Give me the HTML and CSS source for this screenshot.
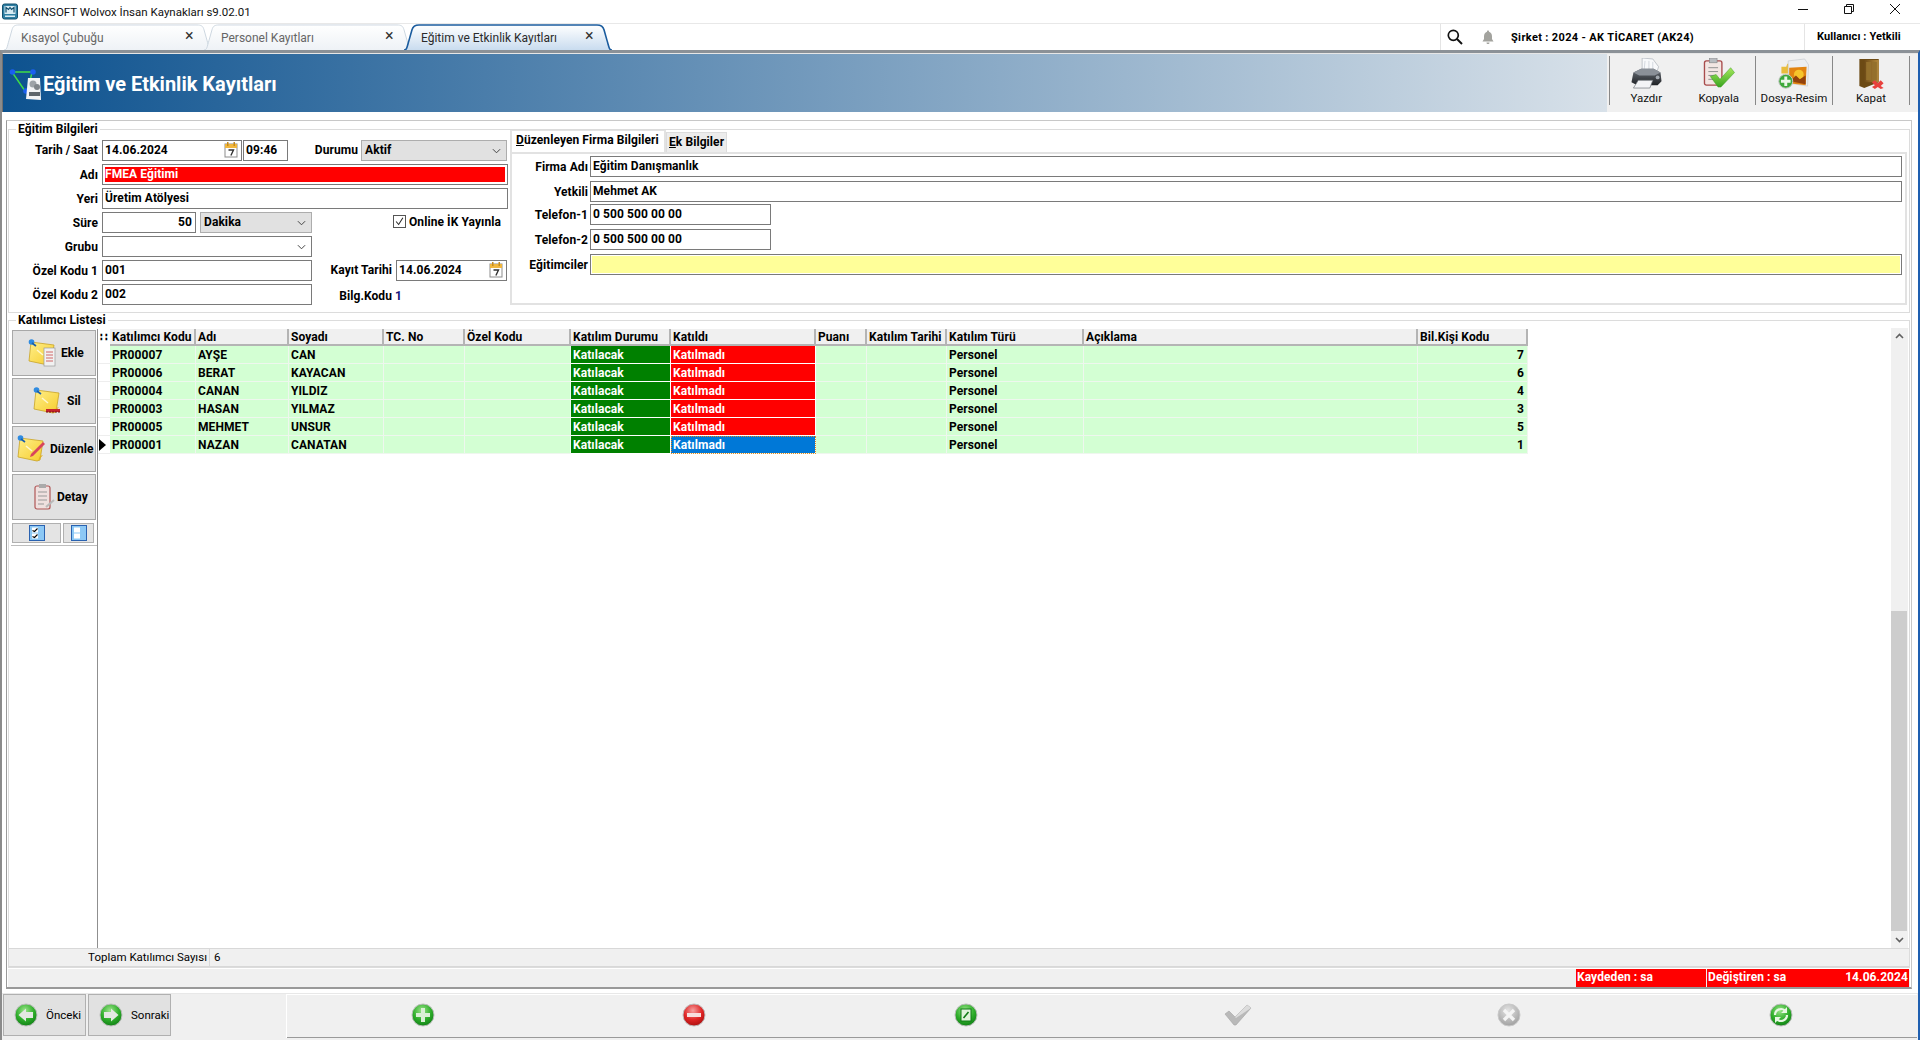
FILE: index.html
```html
<!DOCTYPE html>
<html lang="tr">
<head>
<meta charset="utf-8">
<title>AKINSOFT Wolvox İnsan Kaynakları</title>
<link rel="stylesheet" href="styles.css">
</head>
<body>
<svg class="defs" aria-hidden="true">
  <defs>
    <radialGradient id="gball" cx="45%" cy="30%" r="75%"><stop offset="0" stop-color="#9be58a"/><stop offset=".55" stop-color="#2fae2b"/><stop offset="1" stop-color="#0c7a12"/></radialGradient>
    <radialGradient id="rball" cx="45%" cy="30%" r="75%"><stop offset="0" stop-color="#f6a0a0"/><stop offset=".55" stop-color="#e02525"/><stop offset="1" stop-color="#a50d0d"/></radialGradient>
    <radialGradient id="xball" cx="45%" cy="30%" r="75%"><stop offset="0" stop-color="#e4e4e4"/><stop offset="1" stop-color="#9c9c9c"/></radialGradient>
    <linearGradient id="note" x1="0" y1="0" x2="1" y2="1"><stop offset="0" stop-color="#ffef8a"/><stop offset="1" stop-color="#f6cc2c"/></linearGradient>
    <linearGradient id="tabA" x1="0" y1="0" x2="0" y2="1"><stop offset="0" stop-color="#fff"/><stop offset="1" stop-color="#c9dcef"/></linearGradient>
    <linearGradient id="tabI" x1="0" y1="0" x2="0" y2="1"><stop offset="0" stop-color="#fff"/><stop offset="1" stop-color="#eef2f6"/></linearGradient>
    <linearGradient id="door" x1="0" y1="0" x2="1" y2="0"><stop offset="0" stop-color="#6d4a16"/><stop offset="1" stop-color="#b58a3c"/></linearGradient>
    <linearGradient id="chk" x1="0" y1="0" x2="0" y2="1"><stop offset="0" stop-color="#a5e85c"/><stop offset="1" stop-color="#39a51f"/></linearGradient>
    <linearGradient id="prn" x1="0" y1="0" x2="0" y2="1"><stop offset="0" stop-color="#6b7179"/><stop offset="1" stop-color="#1f2226"/></linearGradient>
    <symbol id="i-cal" viewBox="0 0 14 16">
      <rect x="1" y="2" width="12" height="13" fill="#fff" stroke="#8d8d8d"/><rect x="1" y="2" width="12" height="4" fill="#f1b73e"/>
      <rect x="3" y="0" width="1.5" height="4" fill="#c58a1d"/><rect x="9.5" y="0" width="1.5" height="4" fill="#c58a1d"/>
      <path d="M4.5 8h5l-2.6 5.5" fill="none" stroke="#333" stroke-width="1.4"/>
    </symbol>
    <symbol id="i-chev" viewBox="0 0 10 6"><path d="M1 1l4 4 4-4" fill="none" stroke="#444" stroke-width="1.1"/></symbol>
    <symbol id="i-note" viewBox="0 0 28 28">
      <path d="M3 3l23 3-3 19-3 1-19-4z" fill="url(#note)" stroke="#c9a326" stroke-width=".8"/>
      <path d="M21 26l2-5 3-1z" fill="#e0b020"/>
      <circle cx="3.500" cy="3" r="2.800" fill="#2f8be0"/><path d="M4 4l4 3" stroke="#1c5fa8" stroke-width="1.600"/>
      <path d="M9 11l6 5" stroke="#fff8cf" stroke-width="1.500"/>
    </symbol>
    <symbol id="i-ball-plus" viewBox="0 0 24 24"><circle cx="12" cy="12" r="11" fill="url(#gball)" stroke="#bcbcbc"/><path d="M10 5h4v5h5v4h-5v5h-4v-5H5v-4h5z" fill="#d9efd5"/></symbol>
    <symbol id="i-ball-minus" viewBox="0 0 24 24"><circle cx="12" cy="12" r="11" fill="url(#rball)" stroke="#bcbcbc"/><rect x="5" y="10" width="14" height="4" fill="#f7dede"/></symbol>
    <symbol id="i-ball-edit" viewBox="0 0 24 24"><circle cx="12" cy="12" r="11" fill="url(#gball)" stroke="#bcbcbc"/><rect x="7" y="6" width="10" height="12" fill="#dff3da" stroke="#0f7a14"/><path d="M9.5 15l5-6" stroke="#0f7a14" stroke-width="1.6"/></symbol>
    <symbol id="i-ball-x" viewBox="0 0 24 24"><circle cx="12" cy="12" r="11" fill="url(#xball)" stroke="#c9c9c9"/><path d="M7 7l10 10M17 7L7 17" stroke="#f4f4f4" stroke-width="3.4"/></symbol>
    <symbol id="i-ball-ref" viewBox="0 0 24 24"><circle cx="12" cy="12" r="11" fill="url(#gball)" stroke="#bcbcbc"/><path d="M6 12a6 6 0 0 1 10-4.4M18 12a6 6 0 0 1-10 4.4" fill="none" stroke="#e7f7e2" stroke-width="2.2"/><path d="M18 4v6h-6zM6 20v-6h6z" fill="#e7f7e2"/></symbol>
    <symbol id="i-ball-left" viewBox="0 0 24 24"><circle cx="12" cy="12" r="11" fill="url(#gball)" stroke="#bcbcbc"/><path d="M4.5 12L12 5.5V9h7v6h-7v3.5z" fill="#e3e8e2"/></symbol>
    <symbol id="i-ball-right" viewBox="0 0 24 24"><circle cx="12" cy="12" r="11" fill="url(#gball)" stroke="#bcbcbc"/><path d="M19.5 12L12 5.5V9H5v6h7v3.5z" fill="#e3e8e2"/></symbol>
    <symbol id="i-minibox" viewBox="0 0 16 16"><rect x=".5" y=".5" width="15" height="15" fill="#8cc8f5" stroke="#2a62b0"/><rect x="3" y="2.5" width="6" height="5" fill="#fff"/><rect x="3" y="8.5" width="6" height="5" fill="#fff"/></symbol>
  </defs>
</svg>

<div class="app">
  <header class="titlebar">
    <svg class="appicon" viewBox="0 0 16 16"><rect x=".5" y=".5" width="15" height="15" rx="2" fill="#2e7fa3" stroke="#12506f"/><rect x="2.5" y="2.5" width="11" height="8" fill="#d8ecf4"/><path d="M4 9V4l2.5 2L8 4l1.5 2L12 4v5" fill="none" stroke="#12506f" stroke-width="1.2"/><rect x="3" y="12" width="10" height="1.5" fill="#d8ecf4"/></svg>
    <span class="titletext">AKINSOFT Wolvox İnsan Kaynakları s9.02.01</span>
    <div class="winctl">
      <svg class="winbtn" viewBox="0 0 12 12"><path d="M1 6.5h10" stroke="#111"/></svg>
      <svg class="winbtn" viewBox="0 0 12 12"><path d="M3.5 3V1.5h7v7H9M1.5 3.5h7v7h-7z" fill="none" stroke="#111"/></svg>
      <svg class="winbtn" viewBox="0 0 12 12"><path d="M1 1l10 10M11 1L1 11" stroke="#111"/></svg>
    </div>
  </header>

  <nav class="tabbar">
    <div class="tab">
      <svg class="tabshape" viewBox="0 0 210 27" preserveAspectRatio="none"><path d="M1 27C4 27 4 24 6 17L9 6C10 2 12 1 16 1H194C198 1 200 2 201 6L204 17C206 24 206 27 209 27" fill="url(#tabI)" stroke="#ccd6df"/></svg>
      <span class="tablabel">Kısayol Çubuğu</span><span class="tabx">×</span>
    </div>
    <div class="tab">
      <svg class="tabshape" viewBox="0 0 210 27" preserveAspectRatio="none"><path d="M1 27C4 27 4 24 6 17L9 6C10 2 12 1 16 1H194C198 1 200 2 201 6L204 17C206 24 206 27 209 27" fill="url(#tabI)" stroke="#ccd6df"/></svg>
      <span class="tablabel">Personel Kayıtları</span><span class="tabx">×</span>
    </div>
    <div class="tab tab-active">
      <svg class="tabshape" viewBox="0 0 210 27" preserveAspectRatio="none"><path d="M1 27C4 27 4 24 6 17L9 6C10 2 12 1 16 1H194C198 1 200 2 201 6L204 17C206 24 206 27 209 27" fill="url(#tabA)" stroke="#1b5c9e" stroke-width="1.6"/></svg>
      <span class="tablabel">Eğitim ve Etkinlik Kayıtları</span><span class="tabx">×</span>
    </div>
    <div class="tabinfo">
      <svg class="searchicon" viewBox="0 0 16 16"><circle cx="6.3" cy="6.3" r="5" fill="none" stroke="#111" stroke-width="1.7"/><path d="M10 10l5 5" stroke="#111" stroke-width="2"/></svg>
      <svg class="bellicon" viewBox="0 0 12 14"><path d="M6 0.5c.8 0 1 .6 1 1.2C9 2.3 10 4 10 6.500v2.500l1.500 2.500H.5L2 9V6.500C2 4 3 2.300 5 1.700 5 1.100 5.200.5 6 .5zM4.500 12.500h3c0 1-.6 1.500-1.500 1.500s-1.500-.5-1.500-1.500z" fill="#a3a39e"/></svg>
      <span class="company">Şirket : 2024 - AK TİCARET (AK24)</span>
      <span class="user">Kullanıcı : Yetkili</span>
    </div>
  </nav>

  <main class="window">
    <section class="banner">
      <div class="bannerhead">
        <svg class="bannericon" viewBox="0 0 34 34"><path d="M3 4h20M3 4l13 19M23 4l-3 14" stroke="#3fdc47" stroke-width="1.400" fill="none"/><circle cx="3.500" cy="4" r="2.800" fill="#1a5ff0"/><circle cx="24" cy="4" r="2.800" fill="#1a5ff0"/><circle cx="17" cy="23" r="2.800" fill="#1a5ff0"/><path d="M19 10h12l1 22-15-1z" fill="#f2f4f6"/><circle cx="24" cy="16" r="3.500" fill="#9da3a8"/><circle cx="28" cy="19" r="3" fill="#7f858a"/><rect x="20" y="24" width="11" height="4" fill="#5e666c"/></svg>
        <h1 class="bannertitle">Eğitim ve Etkinlik Kayıtları</h1>
      </div>
      <div class="toolbar">
        <div class="toolgroup tg-2">
          <div class="tool">
            <svg class="toolicon" viewBox="0 0 32 32"><path d="M12 0l11 1 6 8-3 9H12z" fill="#f8f9fb" stroke="#aab0b8" stroke-width=".7"/><path d="M15 3l-1 10M19 3v10M23 4v9" stroke="#d3d8de"/><path d="M3 15l8-4h13l7 4 1 9-4 4H7l-6-3z" fill="url(#prn)"/><path d="M3 15l8-4h13l7 4-6 3H9z" fill="#8a9098"/><path d="M8 23h15l-3 8H3z" fill="#f3f4f6" stroke="#6e737a" stroke-width=".7"/><circle cx="28" cy="20" r="2" fill="#a3a9b0"/></svg>
            <span class="toollabel">Yazdır</span>
          </div>
          <div class="tool">
            <svg class="toolicon" viewBox="0 0 32 32"><rect x="1" y="3" width="18" height="25" rx="2" fill="#f3e6e3" stroke="#a84c4c" stroke-width="1.400"/><rect x="6" y="0" width="8" height="5" fill="#b9bcc0" stroke="#777" stroke-width=".5"/><path d="M5 10h10M5 14h10M5 18h7M5 22h5" stroke="#8f8f8f"/><path d="M7 19l6-2 4 5L28 10l4 5-14 15h-3z" fill="url(#chk)" stroke="#3d9c22" stroke-width=".5"/></svg>
            <span class="toollabel">Kopyala</span>
          </div>
        </div>
        <div class="toolgroup">
          <div class="tool">
            <svg class="toolicon" viewBox="0 0 32 32"><path d="M3 9h5l1-3h4v10H3z" fill="#e9bd3b"/><path d="M10 3l17-2 4 6-1 22-20-3z" fill="#eceef1" stroke="#c0c4c9" stroke-width=".6"/><path d="M11 10l18-1-1 19-17-2z" fill="#e28412"/><circle cx="21" cy="17" r="5" fill="#f6c52b"/><path d="M12 24l6-6 4 4 6-4v9z" fill="#93420c"/><circle cx="7.500" cy="24" r="7.200" fill="#3da93a" stroke="#c8c8c8"/><path d="M6 19h3v3.500h3.500v3H9V29H6v-3.500H2.500v-3H6z" fill="#eaf6e8"/></svg>
            <span class="toollabel">Dosya-Resim</span>
          </div>
        </div>
        <div class="toolgroup">
          <div class="tool">
            <svg class="toolicon" viewBox="0 0 32 32"><path d="M4 1h20v24l-15 6-5-2z" fill="#6c4a14"/><path d="M9 2h15v23H9z" fill="url(#door)"/><path d="M11 4h5v19h-5zM18 4h4v19h-4z" fill="#94702c"/><path d="M20 23l3 3 3-3 3 3-3 3 3 2-3 1-3-2-3 2-3-2 3-2-3-3z" fill="#e8413d"/></svg>
            <span class="toollabel">Kapat</span>
          </div>
        </div>
      </div>
    </section>

    <div class="outerbox">
      <section class="group group-info">
        <span class="legend">Eğitim Bilgileri</span>
        <div class="infobody">
          <div class="form">
            <div class="row">
              <label class="lab">Tarih / Saat</label>
              <div class="inp w-date"><span>14.06.2024</span><svg class="cal" viewBox="0 0 14 16"><use href="#i-cal"/></svg></div>
              <div class="inp w-time"><span>09:46</span></div>
              <label class="lab lab-durum">Durumu</label>
              <div class="sel w-durum"><span>Aktif</span><svg class="chev" viewBox="0 0 10 6"><use href="#i-chev"/></svg></div>
            </div>
            <div class="row">
              <label class="lab">Adı</label>
              <div class="inp w-full inp-red"><span>FMEA Eğitimi</span></div>
            </div>
            <div class="row">
              <label class="lab">Yeri</label>
              <div class="inp w-full"><span>Üretim Atölyesi</span></div>
            </div>
            <div class="row">
              <label class="lab">Süre</label>
              <div class="inp w-sure inp-right"><span>50</span></div>
              <div class="sel w-birim"><span>Dakika</span><svg class="chev" viewBox="0 0 10 6"><use href="#i-chev"/></svg></div>
              <div class="check"><span class="checkbox"><svg viewBox="0 0 13 13"><path d="M2.500 6.500l3 3.500 5-8" fill="none" stroke="#222" stroke-width="1.200"/></svg></span><span>Online İK Yayınla</span></div>
            </div>
            <div class="row">
              <label class="lab">Grubu</label>
              <div class="inp w-half inp-combo"><svg class="chev" viewBox="0 0 10 6"><use href="#i-chev"/></svg></div>
            </div>
            <div class="row">
              <label class="lab">Özel Kodu 1</label>
              <div class="inp w-half"><span>001</span></div>
              <label class="lab lab-kayit">Kayıt Tarihi</label>
              <div class="inp w-kayit"><span>14.06.2024</span><svg class="cal" viewBox="0 0 14 16"><use href="#i-cal"/></svg></div>
            </div>
            <div class="row">
              <label class="lab">Özel Kodu 2</label>
              <div class="inp w-half"><span>002</span></div>
              <label class="lab lab-kayit lab-low">Bilg.Kodu</label>
              <span class="bilgval">1</span>
            </div>
          </div>

          <div class="panel">
            <div class="pagetabs">
              <span class="pagetab pagetab-on"><u>D</u>üzenleyen Firma Bilgileri</span>
              <span class="pagetab pagetab-ek"><u>E</u>k Bilgiler</span>
            </div>
            <div class="page">
              <div class="prow"><label class="plab">Firma Adı</label><div class="inp p-full"><span>Eğitim Danışmanlık</span></div></div>
              <div class="prow"><label class="plab">Yetkili</label><div class="inp p-full"><span>Mehmet AK</span></div></div>
              <div class="prow prow-tight"><label class="plab">Telefon-1</label><div class="inp p-tel"><span>0 500 500 00 00</span></div></div>
              <div class="prow"><label class="plab">Telefon-2</label><div class="inp p-tel"><span>0 500 500 00 00</span></div></div>
              <div class="prow"><label class="plab">Eğitimciler</label><div class="inp p-full inp-yellow"></div></div>
            </div>
          </div>
        </div>
      </section>

      <section class="group group-list">
        <span class="legend">Katılımcı Listesi</span>
        <div class="listbody">
          <aside class="side">
            <div class="sidebtns">
              <button class="sbtn sbtn-ekle"><svg class="sicon" viewBox="0 0 28 28"><use href="#i-note"/><rect x="16" y="9" width="11" height="18" fill="#f1f1f1" stroke="#9a9a9a" stroke-width=".7"/><path d="M18 13h7M18 16h7M18 19h7M18 22h7" stroke="#d06666"/></svg><span>Ekle</span></button>
              <button class="sbtn sbtn-sil"><svg class="sicon" viewBox="0 0 28 28"><use href="#i-note"/><path d="M13 22h14v3H13z" fill="#c4232a"/><path d="M13 25h14" stroke="#7d1116" stroke-dasharray="2 1"/></svg><span>Sil</span></button>
              <button class="sbtn sbtn-duz"><svg class="sicon" viewBox="0 0 28 28"><use href="#i-note"/><path d="M14 19L26 7l2 2-12 12-3 1z" fill="#d8445c"/></svg><span>Düzenle</span></button>
              <button class="sbtn sbtn-det"><svg class="sicon" viewBox="0 0 28 28"><rect x="6" y="3" width="15" height="23" rx="2" fill="#efe0df" stroke="#b05757" stroke-width="1.200"/><rect x="10" y="1" width="7" height="4" fill="#aaa"/><path d="M9 9h9M9 13h9M9 17h9M9 21h6" stroke="#999"/><path d="M17 24l8-7" stroke="#b9b9b9" stroke-width="2"/></svg><span>Detay</span></button>
            </div>
            <div class="minibtns">
              <button class="mbtn mbtn-w"><svg class="mini" viewBox="0 0 16 16"><use href="#i-minibox"/><path d="M3.500 5.500l2 1 3-3M3.500 11.500l2 1 3-3" fill="none" stroke="#000" stroke-width="1.100"/></svg></button>
              <button class="mbtn mbtn-n"><svg class="mini" viewBox="0 0 16 16"><use href="#i-minibox"/></svg></button>
            </div>
          </aside>

          <div class="gridwrap">
            <div class="grid">
              <div class="gh gh-ind">∷</div><div class="gh">Katılımcı Kodu</div><div class="gh">Adı</div><div class="gh">Soyadı</div><div class="gh">TC. No</div><div class="gh">Özel Kodu</div><div class="gh">Katılım Durumu</div><div class="gh">Katıldı</div><div class="gh">Puanı</div><div class="gh">Katılım Tarihi</div><div class="gh">Katılım Türü</div><div class="gh">Açıklama</div><div class="gh">Bil.Kişi Kodu</div>

              <div class="gi"></div><div class="gc">PR00007</div><div class="gc">AYŞE</div><div class="gc">CAN</div><div class="gc"></div><div class="gc"></div><div class="gc gc-green">Katılacak</div><div class="gc gc-red">Katılmadı</div><div class="gc"></div><div class="gc"></div><div class="gc">Personel</div><div class="gc"></div><div class="gc gc-num">7</div>
              <div class="gi"></div><div class="gc">PR00006</div><div class="gc">BERAT</div><div class="gc">KAYACAN</div><div class="gc"></div><div class="gc"></div><div class="gc gc-green">Katılacak</div><div class="gc gc-red">Katılmadı</div><div class="gc"></div><div class="gc"></div><div class="gc">Personel</div><div class="gc"></div><div class="gc gc-num">6</div>
              <div class="gi"></div><div class="gc">PR00004</div><div class="gc">CANAN</div><div class="gc">YILDIZ</div><div class="gc"></div><div class="gc"></div><div class="gc gc-green">Katılacak</div><div class="gc gc-red">Katılmadı</div><div class="gc"></div><div class="gc"></div><div class="gc">Personel</div><div class="gc"></div><div class="gc gc-num">4</div>
              <div class="gi"></div><div class="gc">PR00003</div><div class="gc">HASAN</div><div class="gc">YILMAZ</div><div class="gc"></div><div class="gc"></div><div class="gc gc-green">Katılacak</div><div class="gc gc-red">Katılmadı</div><div class="gc"></div><div class="gc"></div><div class="gc">Personel</div><div class="gc"></div><div class="gc gc-num">3</div>
              <div class="gi"></div><div class="gc">PR00005</div><div class="gc">MEHMET</div><div class="gc">UNSUR</div><div class="gc"></div><div class="gc"></div><div class="gc gc-green">Katılacak</div><div class="gc gc-red">Katılmadı</div><div class="gc"></div><div class="gc"></div><div class="gc">Personel</div><div class="gc"></div><div class="gc gc-num">5</div>
              <div class="gi gi-cur"><span class="curarrow"></span></div><div class="gc">PR00001</div><div class="gc">NAZAN</div><div class="gc">CANATAN</div><div class="gc"></div><div class="gc"></div><div class="gc gc-green">Katılacak</div><div class="gc gc-sel">Katılmadı</div><div class="gc"></div><div class="gc"></div><div class="gc">Personel</div><div class="gc"></div><div class="gc gc-num">1</div>
            </div>
          </div>

          <div class="scrollbar">
            <svg class="sarrow" viewBox="0 0 17 17"><path d="M5 10l3.500-3.500L12 10" fill="none" stroke="#606060" stroke-width="1.600"/></svg>
            <div class="strack"></div>
            <div class="sthumb"></div>
            <svg class="sarrow" viewBox="0 0 17 17"><path d="M5 7l3.500 3.500L12 7" fill="none" stroke="#606060" stroke-width="1.600"/></svg>
          </div>
        </div>
        <div class="totals"><span class="totlabel">Toplam Katılımcı Sayısı</span><span class="totval">6</span></div>
      </section>

      <footer class="statusbar">
        <span class="stat stat-k">Kaydeden : sa</span>
        <span class="stat stat-d"><span>Değiştiren : sa</span><span>14.06.2024</span></span>
      </footer>
    </div>

    <section class="actionbar">
      <div class="navbtns">
        <button class="nbtn"><svg class="nicon" viewBox="0 0 24 24"><use href="#i-ball-left"/></svg><span>Önceki</span></button>
        <button class="nbtn"><svg class="nicon" viewBox="0 0 24 24"><use href="#i-ball-right"/></svg><span>Sonraki</span></button>
      </div>
      <div class="actions">
        <div class="act"><svg class="aicon" viewBox="0 0 24 24"><use href="#i-ball-plus"/></svg></div>
        <div class="act"><svg class="aicon" viewBox="0 0 24 24"><use href="#i-ball-minus"/></svg></div>
        <div class="act"><svg class="aicon" viewBox="0 0 24 24"><use href="#i-ball-edit"/></svg></div>
        <div class="act"><svg class="aicon aicon-w" viewBox="0 0 28 22"><path d="M1 10l4-3 6 6L23 1l4 3-15 17h-2z" fill="#b9b9b9" stroke="#a2a2a2" stroke-width=".6"/><path d="M5 7l6 6L23 1l4 3-15 10z" fill="#dcdcdc"/></svg></div>
        <div class="act"><svg class="aicon" viewBox="0 0 24 24"><use href="#i-ball-x"/></svg></div>
        <div class="act"><svg class="aicon" viewBox="0 0 24 24"><use href="#i-ball-ref"/></svg></div>
      </div>
    </section>
  </main>
</div>
</body>
</html>
```
FILE: styles.css
```css
* { box-sizing: border-box; }
html, body { margin: 0; padding: 0; height: 1040px; overflow: hidden; }
body { width: 1920px; background: #fff; color: #000;
  font-family: Roboto, "Liberation Sans", sans-serif; font-size: 12px; font-weight: 700; letter-spacing: .08px; }
.defs { position: absolute; width: 0; height: 0; }
.app { display: flex; flex-direction: column; height: 1040px; overflow: hidden; }

/* title bar */
.titlebar { height: 24px; display: flex; align-items: center; padding-left: 2px; border-bottom: 1px solid #e8e8e8; flex: none; }
.appicon { width: 16px; height: 17px; margin-right: 5px; }
.titletext { font-weight: 400; font-size: 11.500px; color: #111; letter-spacing: 0; }
.winctl { margin-left: auto; display: flex; gap: 34px; padding-right: 19px; margin-top: -5px; }
.winbtn { width: 12px; height: 12px; }

/* tabs */
.tabbar { height: 26px; flex: none; display: flex; padding-left: 3px; }
.tab { position: relative; width: 210px; margin-right: -10px; display: flex; align-items: center; padding: 2px 0 0 18px; color: #666; font-weight: 400; font-size: 12px; letter-spacing: 0; }
.tab-active { color: #2b2b2b; }
.tabshape { position: absolute; inset: 0; width: 100%; height: 100%; }
.tablabel, .tabx { position: relative; }
.tabx { position: absolute; left: 182px; top: 4px; font-size: 16px; line-height: 16px; color: #333; }
.tabinfo { margin-left: auto; display: flex; align-items: center; width: 480px; height: 26px; border-left: 1px solid #e4e4e4; position: relative; }
.searchicon { width: 16px; height: 16px; margin-left: 6px; }
.bellicon { width: 12px; height: 14px; margin-left: 19px; }
.company { margin-left: 17px; font-size: 11px; letter-spacing: .35px; width: 293px; }
.user { font-size: 11px; border-left: 1px solid #e4e4e4; height: 26px; line-height: 26px; padding-left: 12px; letter-spacing: .1px; }

/* window */
.window { flex: 1; display: flex; flex-direction: column; border-top: 3px solid #8b9197; border-left: 2px solid #8b8b8b; border-right: 2px solid #1f5fb0; min-height: 0; }
.banner { height: 59px; flex: none; display: flex; border-top: 1px solid #e6e6e6; border-left: 1px solid #6f6f6f; }
.bannerhead { flex: 1; display: flex; align-items: center; background: linear-gradient(90deg, #0d528f, #d8e1e9); padding-left: 3px; }
.bannericon { width: 34px; height: 34px; margin-top: 4px; margin-left: 3px; }
.bannertitle { margin: 2px 0 0 0; color: #fff; font-size: 20px; font-weight: 700; letter-spacing: 0; }
.toolbar { width: 311px; flex: none; display: flex; background: #f0f0f0; padding: 2px 7px 7px 2px; }
.toolgroup { display: flex; border-left: 1px solid #888; width: 77px; justify-content: center; flex: none; }
.toolgroup.tg-2 { width: 146px; }
.toolgroup:last-child { border-right: 1px solid #888; width: 78px; }
.tool { flex: 1; display: flex; flex-direction: column; align-items: center; }
.toolicon { width: 32px; height: 32px; margin-top: 2px; }
.toollabel { font-weight: 400; font-size: 11.500px; line-height: 14px; margin-top: 2px; color: #111; white-space: nowrap; letter-spacing: 0; }

.outerbox { margin: 8px 6px 0 4px; height: 869px; flex: none; border: 1px solid #c8c8c8; border-bottom: 2px solid #999; border-left: 1px solid #9a9a9a; display: flex; flex-direction: column; padding: 0 1px; }
.group { border: 1px solid #dcdcdc; }
.legend { display: block; width: fit-content; margin: -8px 0 0 7px; padding: 0 2px; height: 15px; line-height: 15px; background: #fff; }
.group-info { height: 184px; margin-top: 8px; flex: none; }
.infobody { display: flex; padding: 3px 0 0 0; }

/* left form */
.form { width: 501px; display: flex; flex-direction: column; gap: 3px; flex: none; }
.row { display: flex; height: 21px; }
.lab { width: 89px; text-align: right; margin-right: 4px; line-height: 23px; white-space: nowrap; }
.row:first-child .lab { line-height: 21px; }
.inp { border: 1px solid #7a7a7a; background: #fff; height: 21px; padding-left: 2px; line-height: 19px; display: flex; align-items: flex-start; white-space: nowrap; }
.sel { border: 1px solid #adadad; background: #e1e1e1; height: 21px; padding-left: 3px; line-height: 19px; display: flex; }
.sel span { flex: 1; }
.chev { width: 9px; height: 6px; margin: 7px 5px 0 auto; }
.cal { width: 14px; height: 16px; margin: 1px 3px 0 auto; }
.w-date { width: 140px; }
.w-time { width: 45px; margin-left: 1px; }
.lab-durum { width: 70px; margin-right: 3px; }
.w-durum { width: 146px; }
.w-full { width: 406px; }
.inp-red { padding: 1px; }
.inp-red span { background: #f00; color: #fff; flex: 1; height: 17px; line-height: 15px; border: 1px solid #fff; }
.w-sure { width: 94px; margin-right: 4px; }
.inp-right { justify-content: flex-end; padding-right: 3px; }
.w-birim { width: 112px; }
.check { display: flex; margin-left: 81px; align-items: flex-start; line-height: 17px; padding-top: 2px; white-space: nowrap; }
.checkbox { width: 13px; height: 13px; border: 1px solid #555; background: #fff; margin: 1px 3px 0 0; display: block; }
.checkbox svg { display: block; width: 11px; height: 11px; }
.w-half { width: 210px; }
.inp-combo { padding: 0; }
.lab-kayit { width: 80px; line-height: 21px; }
.lab-low { line-height: 24px; }
.w-kayit { width: 111px; }
.bilgval { color: #12127a; margin-left: -1px; line-height: 24px; }

/* right panel */
.panel { flex: 1; margin-top: -10px; display: flex; flex-direction: column; margin-right: 2px; height: 175px; }
.pagetabs { display: flex; height: 22px; flex: none; align-items: flex-end; }
.pagetab { height: 20px; line-height: 19px; padding: 0 0 0 2px; background: #ececec; border: 1px solid #dcdcdc; border-bottom: 0; white-space: nowrap; }
.pagetab-ek { width: 61px; }
.pagetab-on { height: 22px; line-height: 18px; width: 156px; background: #fff; padding-left: 4px; border-width: 1px 2px 0; border-color: #e2e2e2; }
.page { flex: 1; border: 2px solid #e2e2e2; padding: 1px 3px 0 0; display: flex; flex-direction: column; }
.prow { display: flex; height: 21px; margin-top: 4px; }
.prow:first-child { margin-top: 1px; }
.prow-tight { margin-top: 2px; }
.plab { width: 76px; text-align: right; margin-right: 2px; line-height: 23px; white-space: nowrap; }
.p-full { flex: 1; }
.p-tel { width: 181px; }
.inp-yellow { background: #ffff99; padding: 1px; outline: 1px solid #fff; outline-offset: -2px; }

/* list */
.group-list { height: 648px; flex: none; margin-top: 7px; display: flex; flex-direction: column; }
.listbody { display: flex; height: 620px; flex: none; padding-top: 1px; }
.side { width: 89px; flex: none; border-right: 1px solid #8f8f8f; padding: 1px 0 0 3px; }
.sidebtns { display: flex; flex-direction: column; gap: 2px; width: 84px; }
.sbtn { height: 46px; width: 84px; border: 1px solid #a8a8a8; background: #e1e1e1; display: flex; align-items: center; justify-content: flex-start; padding: 0; font: inherit; color: #000; }
.sicon { width: 28px; height: 28px; flex: none; }
.sbtn-ekle { padding-left: 15px; gap: 5px; }
.sbtn-sil { padding-left: 20px; gap: 6px; }
.sbtn-duz { padding-left: 4px; gap: 5px; }
.sbtn-det { padding-left: 16px; gap: 0; }
.minibtns { display: flex; gap: 2px; margin-top: 3px; padding: 0 1px 2px; border-bottom: 1px solid #bdbdbd; width: 86px; margin-left: -1px; }
.mbtn { height: 20px; border: 1px solid #b0b0b0; background: #e4e4e4; display: flex; align-items: center; justify-content: center; padding: 0; }
.mbtn-w { width: 49px; }
.mbtn-n { width: 31px; }
.mini { width: 16px; height: 16px; }
.gridwrap { flex: 1; min-width: 0; }
.grid { display: grid; grid-template-columns: 12px 86px 93px 95px 81px 106px 100px 145px 51px 80px 137px 334px 110px; grid-template-rows: 17px repeat(6, 18px); width: 1430px; line-height: 19px; }
.gh { background: #f0f0f0; border-right: 2px solid #b4b4b4; border-bottom: 2px solid #b4b4b4; padding-left: 2px; height: 17px; line-height: 17px; white-space: nowrap; overflow: hidden; }
.gh-ind { background: #fff; border: 0; padding: 0; text-align: center; }
.gi { background: #fff; border-bottom: 1px solid #eee; }
.gi-cur { display: flex; align-items: center; padding-left: 1px; }
.curarrow { width: 0; height: 0; border-left: 7px solid #000; border-top: 6px solid transparent; border-bottom: 6px solid transparent; }
.gc { background: #d3ffd3; border-right: 1px solid #eef7ee; border-bottom: 1px solid #eef7ee; padding-left: 2px; white-space: nowrap; overflow: hidden; }
.gc-green { background: #008000; color: #fff; border-color: #fff; }
.gc-red { background: #f00; color: #fff; border-color: #fff; }
.gc-sel { background: #0078d7; color: #fff; outline: 1px dotted #e88a1a; outline-offset: -1px; }
.gc-num { text-align: right; padding-right: 3px; }
.scrollbar { width: 17px; flex: none; margin: -1px 1px 0 0; display: flex; flex-direction: column; background: #f0f0f0; }
.sarrow { width: 17px; height: 17px; flex: none; }
.strack { height: 266px; flex: none; }
.sthumb { flex: 1; background: #cdcdcd; margin-right: 1px; }
.totals { height: 19px; background: #f0f0f0; border-top: 1px solid #d8d8d8; border-bottom: 1px solid #d8d8d8; display: flex; font-weight: 400; line-height: 17px; flex: none; letter-spacing: 0; }
.totlabel { width: 201px; text-align: right; padding-right: 2px; border-right: 1px solid #d8d8d8; font-size: 11.500px; }
.totval { padding-left: 4px; font-size: 11.500px; }

/* status */
.statusbar { height: 18px; margin-top: 1px; background: #f0f0f0; display: flex; justify-content: flex-end; padding: 0 1px 0 0; flex: none; }
.stat { background: #f00; color: #fff; height: 18px; line-height: 17px; padding: 0 1px; white-space: nowrap; }
.stat-k { width: 130px; margin-right: 1px; }
.stat-d { width: 202px; display: flex; justify-content: space-between; }

/* bottom actions */
.actionbar { flex: 1; margin-top: 4px; display: flex; background: #f0f0f0; border-top: 1px solid #e8e8e8; min-height: 0; }
.navbtns { width: 285px; display: flex; gap: 2px; padding: 0 0 2px 1px; flex: none; }
.nbtn { width: 83px; height: 42px; border: 1px solid #b0b0b0; background: #e1e1e1; display: flex; align-items: center; padding: 0 0 0 10px; gap: 8px; font: inherit; font-weight: 400; font-size: 11.500px; color: #000; letter-spacing: 0; }
.nicon { width: 24px; height: 24px; }
.actions { flex: 1; display: grid; grid-template-columns: repeat(6, 1fr); border-top: 1px solid #fff; border-bottom: 1px solid #9a9a9a; height: 44px; margin-right: 1px; padding-bottom: 3px; box-shadow: -1px 0 0 #fff; }
.act { display: flex; align-items: center; justify-content: center; }
.aicon { width: 24px; height: 24px; }
.aicon-w { width: 28px; height: 22px; }
```
